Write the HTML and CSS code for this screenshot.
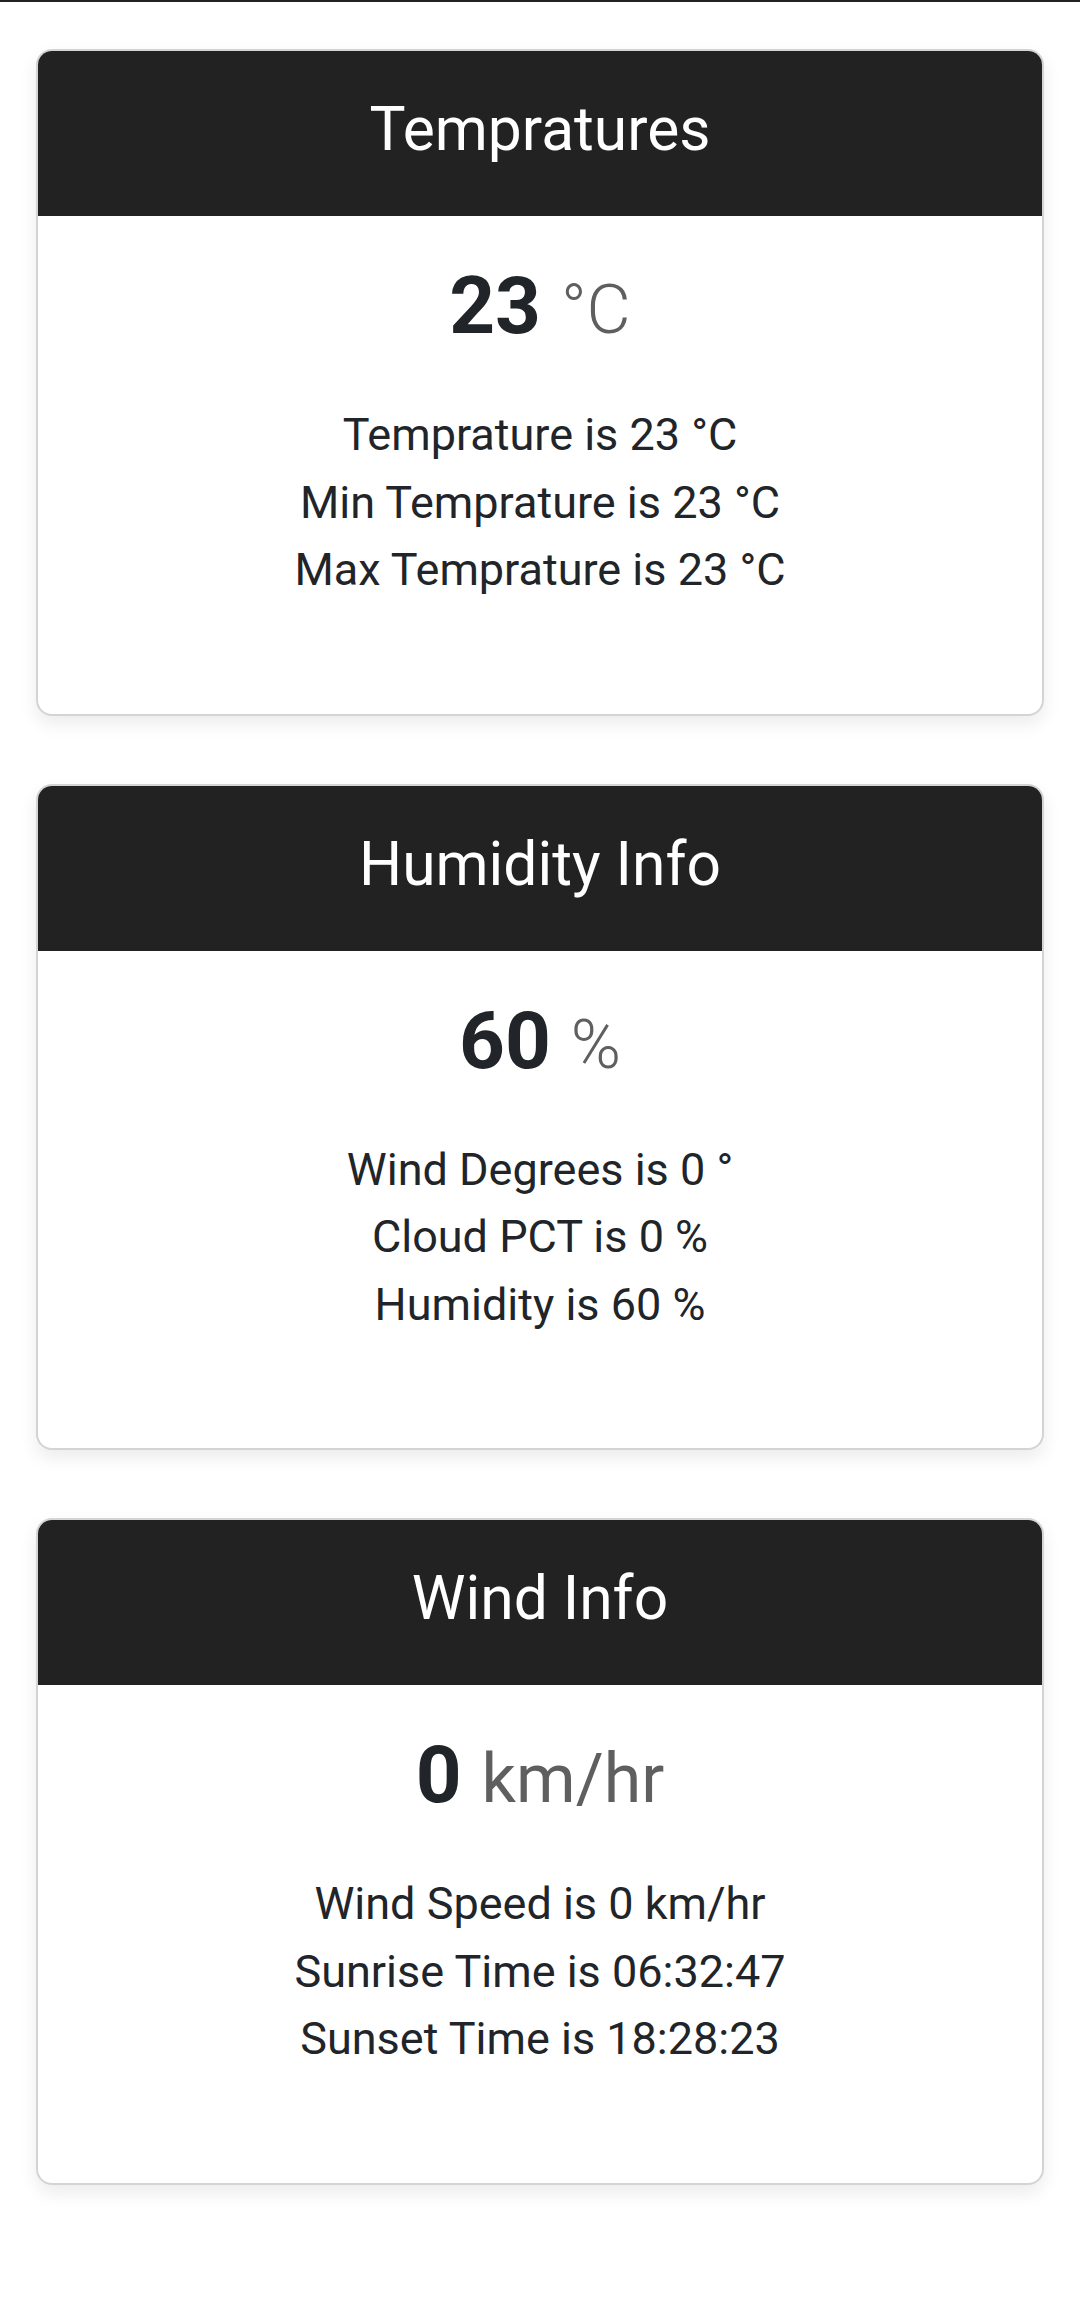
FILE: index.html
```html
<!DOCTYPE html>
<html lang="en">
<head>
<meta charset="utf-8">
<title>Weather</title>
<link rel="stylesheet" href="styles.css">
</head>
<body>
<main class="page">
  <section class="card">
    <header class="card-header"><h2 class="card-title">Tempratures</h2></header>
    <div class="card-body">
      <h1 class="big">23 <span class="unit">°C</span></h1>
      <ul class="lines">
        <li>Temprature is 23 °C</li>
        <li>Min Temprature is 23 °C</li>
        <li>Max Temprature is 23 °C</li>
      </ul>
    </div>
  </section>
  <section class="card">
    <header class="card-header"><h2 class="card-title">Humidity Info</h2></header>
    <div class="card-body">
      <h1 class="big">60 <span class="unit">%</span></h1>
      <ul class="lines">
        <li>Wind Degrees is 0 °</li>
        <li>Cloud PCT is 0 %</li>
        <li>Humidity is 60 %</li>
      </ul>
    </div>
  </section>
  <section class="card">
    <header class="card-header"><h2 class="card-title">Wind Info</h2></header>
    <div class="card-body">
      <h1 class="big">0 <span class="unit unit-regular">km/hr</span></h1>
      <ul class="lines">
        <li>Wind Speed is 0 km/hr</li>
        <li>Sunrise Time is 06:32:47</li>
        <li>Sunset Time is 18:28:23</li>
      </ul>
    </div>
  </section>
</main>
</body>
</html>
```
FILE: styles.css
```css
html, body {
  margin: 0;
  padding: 0;
  background: #fff;
}
body {
  font-family: Roboto, "Noto Sans", "Liberation Sans", sans-serif;
  color: #212529;
  border-top: 2px solid #222;
}
.page {
  display: flex;
  flex-direction: column;
  gap: 68px;
  padding: 47px 36px 80px;
}
.card {
  border: 2px solid #d4d4d4;
  border-radius: 16px;
  background: #fff;
  box-shadow: 0 8px 18px rgba(0, 0, 0, 0.08);
  overflow: hidden;
}
.card-header {
  background: #222;
  height: 165px;
  display: flex;
  align-items: center;
  justify-content: center;
}
.card-title {
  margin: 0 0 6px;
  color: #fff;
  font-size: 60.5px;
  font-weight: 400;
  line-height: 1.2;
}
.card-body {
  padding: 42px 40px 110px;
  text-align: center;
}
.big {
  margin: 0;
  font-size: 80px;
  line-height: 96px;
  font-weight: 700;
}
.unit {
  font-size: 68px;
  font-weight: 300;
  color: #5f5f5f;
}
.unit-regular {
  font-weight: 400;
}
.lines {
  list-style: none;
  margin: 43px 0 0;
  padding: 0;
  font-size: 45px;
  line-height: 67.5px;
}
```
